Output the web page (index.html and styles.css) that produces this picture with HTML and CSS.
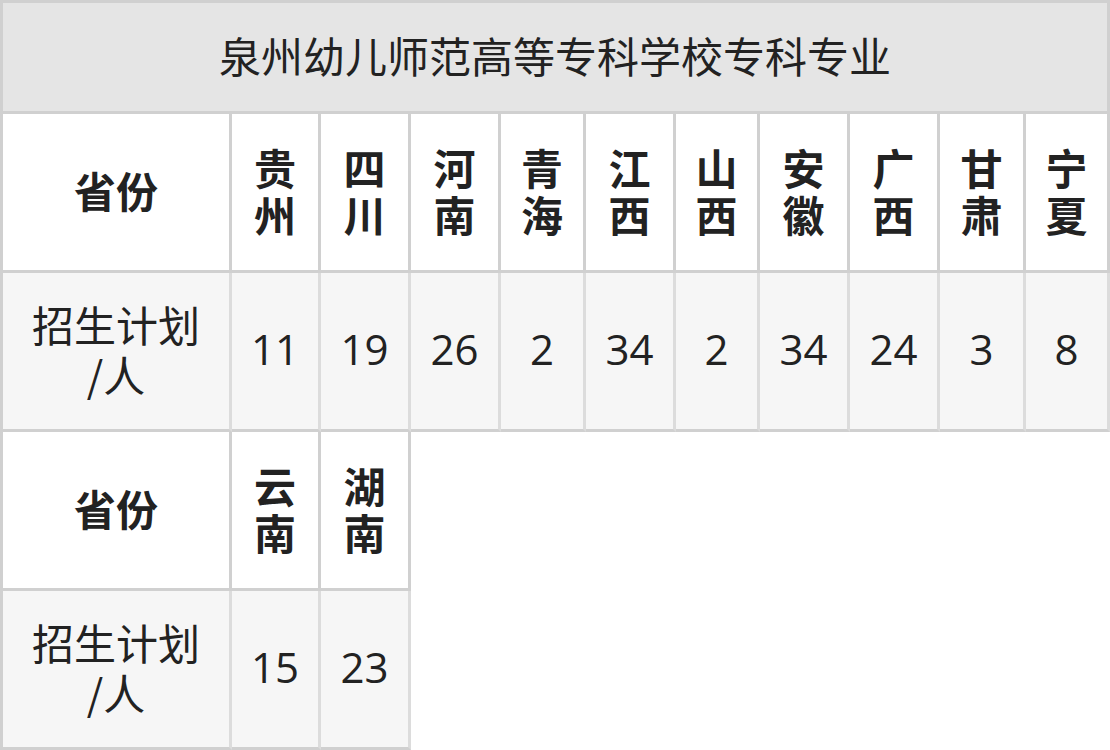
FILE: index.html
```html
<!DOCTYPE html>
<html lang="zh">
<head>
<meta charset="utf-8">
<title>泉州幼儿师范高等专科学校专科专业</title>
<link rel="stylesheet" href="styles.css">
</head>
<body>
<div class="plan">
  <div class="cell title">泉州幼儿师范高等专科学校专科专业</div>

  <div class="cell head first">省份</div>
  <div class="cell head">贵<br>州</div>
  <div class="cell head">四<br>川</div>
  <div class="cell head">河<br>南</div>
  <div class="cell head">青<br>海</div>
  <div class="cell head">江<br>西</div>
  <div class="cell head">山<br>西</div>
  <div class="cell head">安<br>徽</div>
  <div class="cell head">广<br>西</div>
  <div class="cell head">甘<br>肃</div>
  <div class="cell head">宁<br>夏</div>

  <div class="cell data first label">招生计划<br>/人</div>
  <div class="cell data">11</div>
  <div class="cell data">19</div>
  <div class="cell data">26</div>
  <div class="cell data">2</div>
  <div class="cell data">34</div>
  <div class="cell data">2</div>
  <div class="cell data">34</div>
  <div class="cell data">24</div>
  <div class="cell data">3</div>
  <div class="cell data">8</div>

  <div class="cell head first">省份</div>
  <div class="cell head">云<br>南</div>
  <div class="cell head">湖<br>南</div>

  <div class="cell data first label">招生计划<br>/人</div>
  <div class="cell data">15</div>
  <div class="cell data">23</div>
</div>
</body>
</html>
```

FILE: styles.css
```css
html, body {
  margin: 0;
  padding: 0;
  background: #ffffff;
}

body {
  font-family: "Open Sans", "Noto Sans CJK SC", sans-serif;
  color: #222222;
}

.plan {
  display: grid;
  grid-template-columns: 229px 89px 90px 90px 85px 90px 84px 90px 90px 86px 84px;
  grid-template-rows: 111px 159px 159px 159px 159px;
  width: 1107px;
  border-left: 3px solid #d0d0d0;
  border-top: 3px solid #d0d0d0;
}

.cell {
  box-sizing: border-box;
  display: flex;
  align-items: center;
  justify-content: center;
  text-align: center;
  padding-bottom: 5px;
  font-size: 42px;
  line-height: 47px;
  border-right: 3px solid #d0d0d0;
  border-bottom: 3px solid #d0d0d0;
}

.first {
  grid-column-start: 1;
}

.title {
  grid-column: 1 / -1;
  background: #e5e5e5;
  font-family: "Noto Sans CJK SC", sans-serif;
  font-weight: 400;
}

.head {
  background: #ffffff;
  font-family: "Noto Sans CJK SC", sans-serif;
  font-weight: 700;
}

.data {
  background: #f6f6f6;
  border-right-color: #dcdcdc;
}

.label {
  font-family: "Noto Sans CJK SC", sans-serif;
  line-height: 50px;
}
```
